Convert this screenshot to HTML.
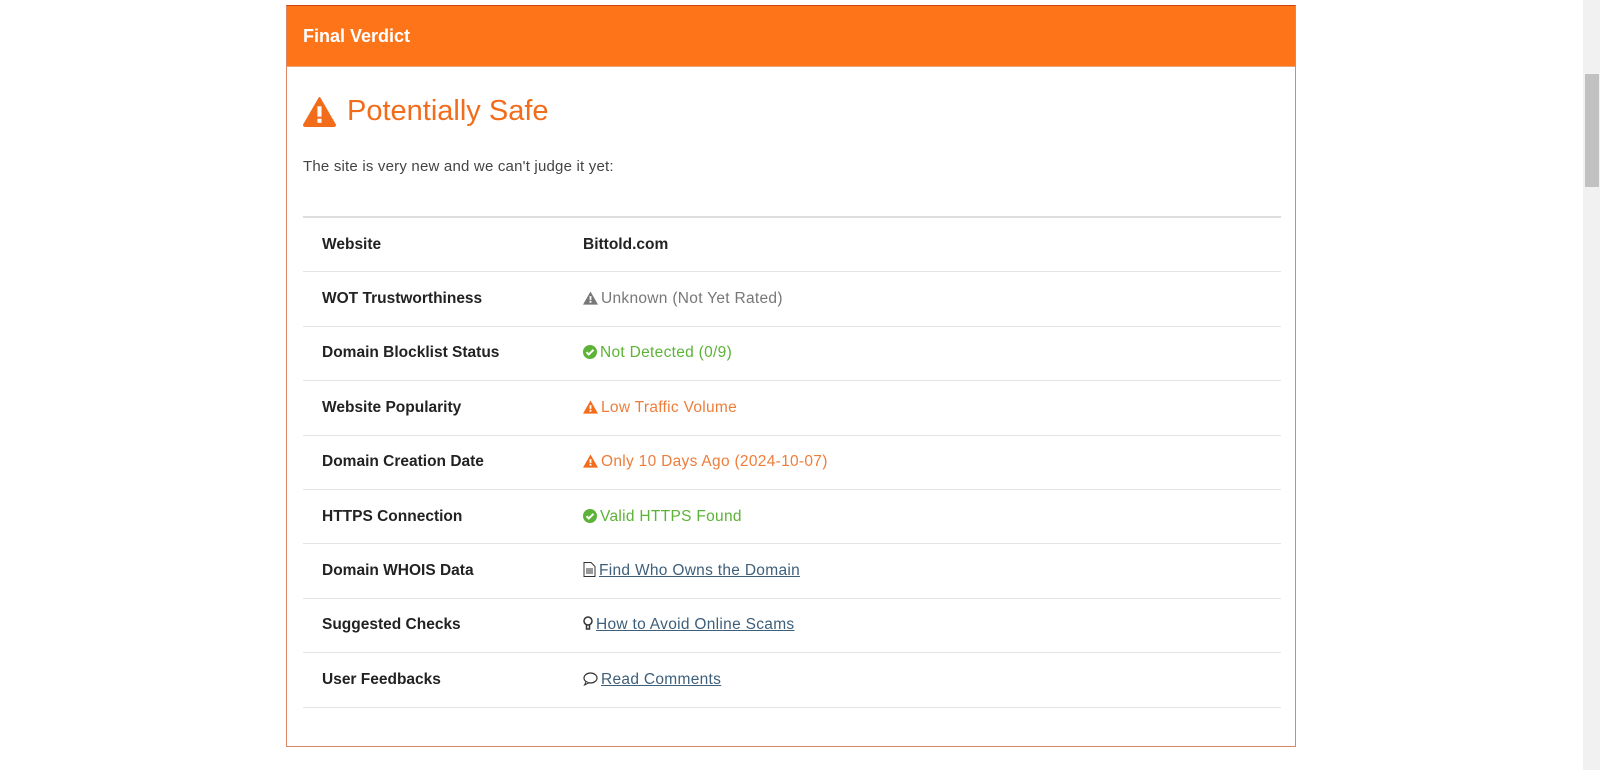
<!DOCTYPE html>
<html><head><style>
body{margin:0;width:1600px;height:770px;background:#fff;font-family:"Liberation Sans",sans-serif;overflow:hidden;position:relative}
.box{position:absolute;left:286px;top:5px;width:1008px;height:740px;border:1px solid #d9876a;border-top:1px solid #c9450d}
.hd{height:60px;background:#fe7519;color:#fff;font-weight:bold;font-size:18px;line-height:60px;padding-left:16px;border-bottom:1px solid #e9a27a}
h1{position:absolute;left:16px;top:89px;margin:0;font-weight:normal;font-size:29px;color:#f26d1b;display:flex;align-items:center;gap:8px}
.sub{position:absolute;left:16px;top:152px;font-size:15px;color:#444;letter-spacing:.2px}
table{position:absolute;left:16px;top:210px;width:978px;border-collapse:collapse;border-top:2px solid #ddd}
td{height:53.4px;border-bottom:1px solid #e4e4e4;font-size:15.5px;padding:0;letter-spacing:.3px}
td.l{padding-left:19px;width:261px;font-weight:bold;color:#222;letter-spacing:0}
.g{color:#5cb337}.o{color:#ee7d3a}.gr{color:#777}
a{color:#3e5f7a;text-decoration:underline}
svg{vertical-align:-2px;margin-right:3px}
.sb{position:absolute;left:1583px;top:0;width:17px;height:770px;background:#f1f1f1}
.th{position:absolute;left:1585px;top:74px;width:14px;height:113px;background:#c1c1c1}
</style></head><body>
<div class="box">
<div class="hd">Final Verdict</div>
<h1><svg width="33" height="30" viewBox="0 0 32 29"><path d="M16 1 L31 27 Q31 28 30 28 L2 28 Q1 28 1 27 Z" fill="#f26d1b" stroke="#f26d1b" stroke-linejoin="round" stroke-width="2"/><rect x="14" y="9" width="4" height="10" fill="#fff"/><rect x="14" y="21" width="4" height="4" fill="#fff"/></svg>Potentially Safe</h1>
<div class="sub">The site is very new and we can't judge it yet:</div>
<table>
<tr><td class="l">Website</td><td style="font-weight:bold;color:#222;letter-spacing:0">Bittold.com</td></tr>
<tr><td class="l">WOT Trustworthiness</td><td class="gr"><svg width="15" height="14" viewBox="0 0 16 14"><path d="M8 0L16 14H0Z" fill="#777"/><rect x="7" y="5" width="2" height="4" fill="#fff"/><rect x="7" y="10" width="2" height="2" fill="#fff"/></svg>Unknown (Not Yet Rated)</td></tr>
<tr><td class="l">Domain Blocklist Status</td><td class="g"><svg width="14" height="14" viewBox="0 0 14 14"><circle cx="7" cy="7" r="7" fill="#5cb337"/><path d="M3.5 7.2l2.3 2.3 4.7-4.7" stroke="#fff" stroke-width="2" fill="none"/></svg>Not Detected (0/9)</td></tr>
<tr><td class="l">Website Popularity</td><td class="o"><svg width="15" height="14" viewBox="0 0 16 14"><path d="M8 0L16 14H0Z" fill="#f26d1b"/><rect x="7" y="5" width="2" height="4" fill="#fff"/><rect x="7" y="10" width="2" height="2" fill="#fff"/></svg>Low Traffic Volume</td></tr>
<tr><td class="l">Domain Creation Date</td><td class="o"><svg width="15" height="14" viewBox="0 0 16 14"><path d="M8 0L16 14H0Z" fill="#f26d1b"/><rect x="7" y="5" width="2" height="4" fill="#fff"/><rect x="7" y="10" width="2" height="2" fill="#fff"/></svg>Only 10 Days Ago (2024-10-07)</td></tr>
<tr><td class="l">HTTPS Connection</td><td class="g"><svg width="14" height="14" viewBox="0 0 14 14"><circle cx="7" cy="7" r="7" fill="#5cb337"/><path d="M3.5 7.2l2.3 2.3 4.7-4.7" stroke="#fff" stroke-width="2" fill="none"/></svg>Valid HTTPS Found</td></tr>
<tr><td class="l">Domain WHOIS Data</td><td><svg width="13" height="15" viewBox="0 0 13 15"><path d="M1 .5h7l4 4v10H1z" fill="none" stroke="#333"/><path d="M3 7h7M3 9h7M3 11h7" stroke="#333"/></svg><a>Find Who Owns the Domain</a></td></tr>
<tr><td class="l">Suggested Checks</td><td><svg width="10" height="15" viewBox="0 0 10 15"><circle cx="5" cy="5" r="4" fill="none" stroke="#333" stroke-width="1.5"/><path d="M3.5 9v4h3V9" fill="none" stroke="#333" stroke-width="1.5"/></svg><a>How to Avoid Online Scams</a></td></tr>
<tr><td class="l">User Feedbacks</td><td><svg width="15" height="14" viewBox="0 0 15 14"><ellipse cx="7.5" cy="6" rx="6.5" ry="5" fill="none" stroke="#333" stroke-width="1.2"/><path d="M3 10l-1.5 3 4-2" fill="#fff" stroke="#333" stroke-width="1"/></svg><a>Read Comments</a></td></tr>
</table>
</div>
<div class="sb"></div><div class="th"></div>
</body></html>
